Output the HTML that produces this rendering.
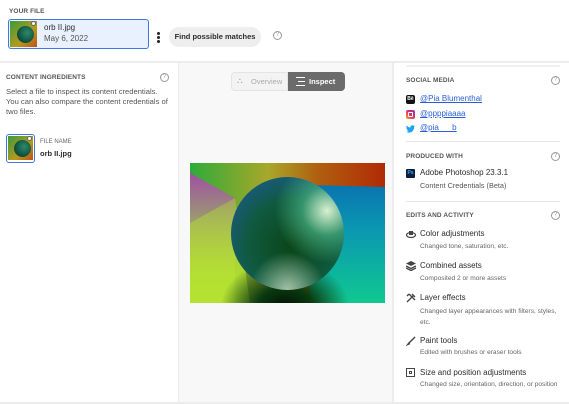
<!DOCTYPE html>
<html><head><meta charset="utf-8"><style>
*{box-sizing:border-box;margin:0;padding:0}
body{width:569px;height:404px;overflow:hidden;background:#fff;font-family:"Liberation Sans",sans-serif;color:#2c2c2c;position:relative}
.abs{position:absolute}
.lbl{font-size:6.5px;font-weight:bold;color:#555;letter-spacing:.1px}
.q{position:absolute;width:9px;height:9px;border:1px solid #999;border-radius:50%;font-size:6px;color:#999;text-align:center;line-height:7px}
.thumb{background:linear-gradient(135deg,#3a9b3a,#b59a1d 60%,#c0501a);overflow:hidden}
.orbt{position:absolute;border-radius:50%;background:radial-gradient(circle at 60% 40%,#2d8a6a,#0b4a3a 70%)}
a{color:#2b5fd9;text-decoration:underline}
.t{font-size:8px}
.s{font-size:6.6px;color:#666}
</style></head><body>
<div class="abs lbl" style="left:9px;top:8px">YOUR FILE</div>
<div class="abs" style="left:8px;top:19px;width:141px;height:30px;border:1.5px solid #3b7be0;border-radius:3px;background:#e8f1fd"></div>
<div class="abs thumb" style="left:10px;top:21px;width:27px;height:26px"><div class="orbt" style="left:7px;top:5px;width:17px;height:17px"></div></div>
<div class="abs" style="left:31px;top:21px;width:5px;height:5px;border-radius:50%;background:#fff;border:1px solid #666"></div>
<div class="abs" style="left:44px;top:23px;font-size:8px">orb II.jpg</div>
<div class="abs" style="left:44px;top:34px;font-size:8px;color:#555">May 6, 2022</div>
<div class="abs" style="left:157px;top:36px;width:3px;height:3px;background:#222;border-radius:50%;box-shadow:0 4px 0 #222,0 -4px 0 #222"></div>
<div class="abs" style="left:169px;top:27px;width:92px;height:20px;border-radius:10px;background:#eee;font-size:7.5px;font-weight:bold;text-align:center;line-height:20px">Find possible matches</div>
<div class="q" style="left:273px;top:31px">?</div>
<div class="abs" style="left:0;top:61px;width:569px;height:2px;background:#ececec"></div>
<div class="abs lbl" style="left:6px;top:74px">CONTENT INGREDIENTS</div>
<div class="q" style="left:160px;top:73px">?</div>
<div class="abs" style="left:6px;top:87px;width:166px;font-size:7.6px;line-height:10px;color:#555">Select a file to inspect its content credentials. You can also compare the content credentials of two files.</div>
<div class="abs" style="left:6px;top:134px;width:29px;height:29px;border:1.5px solid #3b7be0;border-radius:3px"></div>
<div class="abs thumb" style="left:8px;top:136px;width:25px;height:24px"><div class="orbt" style="left:6px;top:4px;width:17px;height:17px"></div></div>
<div class="abs" style="left:27px;top:136px;width:5px;height:5px;border-radius:50%;background:#fff;border:1px solid #666"></div>
<div class="abs" style="left:40px;top:139px;font-size:6px;color:#666">FILE NAME</div>
<div class="abs" style="left:40px;top:149px;font-size:7.5px;font-weight:bold">orb II.jpg</div>
<div class="abs" style="left:178px;top:63px;width:216px;height:339px;background:#f8f8f8;border-left:1px solid #ececec;border-right:2px solid #ececec"></div>
<div class="abs" style="left:231px;top:72px;width:57px;height:19px;border:1px solid #e4e4e4;border-radius:4px 0 0 4px;background:#f3f3f3;font-size:7.5px;color:#aaa;line-height:17px;padding-left:19px">Overview</div>
<div class="abs" style="left:237px;top:76px;font-size:8px;color:#aaa">⛬</div>
<div class="abs" style="left:288px;top:72px;width:57px;height:19px;border-radius:0 4px 4px 0;background:#6b6b6b;color:#fff;font-size:7.5px;font-weight:bold;line-height:19px;padding-left:21px">Inspect</div>
<div class="abs" style="left:296px;top:77px;width:9px;height:9px;border-top:1px solid #fff;border-bottom:1px solid #fff"><div style="margin-top:3px;border-top:1px solid #fff;margin-left:2px"></div></div>
<div class="abs" style="left:190px;top:163px;width:195px;height:140px;overflow:hidden;background:linear-gradient(90deg,#2eaa3a,#a8a82a 40%,#b06010 65%,#b02a05)">
<div class="abs" style="left:0;top:0;width:195px;height:140px;clip-path:polygon(0 10px,45px 35px,45px 140px,0 140px);background:linear-gradient(180deg,#a04aa8 5%,#9a9a70 40%,#b8e030 90%)"></div>
<div class="abs" style="left:0;top:0;width:195px;height:140px;clip-path:polygon(0 60px,45px 35px,60px 140px,0 140px);background:linear-gradient(180deg,rgba(160,150,110,.5),rgba(180,225,50,.9) 80%)"></div>
<div class="abs" style="left:0;top:0;width:195px;height:140px;clip-path:polygon(120px 22px,195px 24px,195px 140px,120px 140px);background:linear-gradient(180deg,#0a63b0,#0a9ab0 50%,#10c890)"></div>
<div class="abs" style="left:30px;top:95px;width:130px;height:50px;background:radial-gradient(ellipse at 50% 100%,#021004,#0a3a10 30%,rgba(20,80,20,0) 70%)"></div>
<div class="abs" style="left:41px;top:14px;width:113px;height:113px;border-radius:50%;background:radial-gradient(circle at 85% 30%,#d8f0d0,rgba(80,190,140,.6) 20%,rgba(0,0,0,0) 42%),radial-gradient(circle at 50% 100%,rgba(200,220,190,.8),rgba(0,0,0,0) 30%),radial-gradient(circle at 55% 60%,#0b4518,#0f5a40 50%,#1a5a80 80%,#8fa0b0)"></div>
</div>
<div class="abs" style="left:406px;top:65px;width:154px;height:2px;background:#f0f0f0"></div>
<div class="abs lbl" style="left:406px;top:77px">SOCIAL MEDIA</div>
<div class="q" style="left:551px;top:76px">?</div>
<div class="abs" style="left:406px;top:95px;width:9px;height:9px;background:#111;border-radius:2px;color:#fff;font-size:5px;font-weight:bold;text-align:center;line-height:9px">Bē</div>
<div class="abs t" style="left:420px;top:94px"><a>@Pia Blumenthal</a></div>
<div class="abs" style="left:406px;top:110px;width:9px;height:9px;border-radius:2px;background:linear-gradient(45deg,#f5a623,#e1306c,#833ab4)"><div style="margin:2px;width:5px;height:5px;border:1px solid #fff;border-radius:1px"></div></div>
<div class="abs t" style="left:420px;top:109px"><a>@ppppiaaaa</a></div>
<svg class="abs" style="left:406px;top:125px" width="9" height="8" viewBox="0 0 24 20"><path fill="#1da1f2" d="M24 2.4a10 10 0 0 1-2.8.8A5 5 0 0 0 23.3.5a10 10 0 0 1-3.1 1.2A4.9 4.9 0 0 0 11.8 6 14 14 0 0 1 1.7.9a4.9 4.9 0 0 0 1.5 6.6A4.9 4.9 0 0 1 1 6.9a4.9 4.9 0 0 0 3.9 4.9 5 5 0 0 1-2.2.1 4.9 4.9 0 0 0 4.6 3.4A9.9 9.9 0 0 1 0 17.3 14 14 0 0 0 7.5 19.5c9.1 0 14-7.5 14-14v-.6A10 10 0 0 0 24 2.4z"/></svg>
<div class="abs t" style="left:420px;top:123px"><a>@pia___b</a></div>
<div class="abs" style="left:406px;top:141px;width:154px;height:1px;background:#e6e6e6"></div>
<div class="abs lbl" style="left:406px;top:153px">PRODUCED WITH</div>
<div class="q" style="left:551px;top:152px">?</div>
<div class="abs" style="left:406px;top:169px;width:9px;height:9px;background:#0a1e3c;border-radius:1px;color:#31a8ff;font-size:5px;font-weight:bold;text-align:center;line-height:9px">Ps</div>
<div class="abs t" style="left:420px;top:168px">Adobe Photoshop 23.3.1</div>
<div class="abs" style="left:420px;top:181px;font-size:7.3px;color:#555">Content Credentials (Beta)</div>
<div class="abs" style="left:406px;top:201px;width:154px;height:1px;background:#e6e6e6"></div>
<div class="abs lbl" style="left:406px;top:212px">EDITS AND ACTIVITY</div>
<div class="q" style="left:551px;top:211px">?</div>
<svg class="abs" style="left:406px;top:230px" width="10" height="8" viewBox="0 0 10 8"><ellipse cx="5" cy="5" rx="4.5" ry="2.5" fill="none" stroke="#444" stroke-width="1.2"/><rect x="3" y="1" width="4" height="4" fill="#444"/></svg>
<div class="abs t" style="left:420px;top:229px">Color adjustments</div>
<div class="abs s" style="left:420px;top:243px">Changed tone, saturation, etc.</div>
<svg class="abs" style="left:406px;top:261px" width="10" height="10" viewBox="0 0 10 10"><path d="M5 0 10 2.5 5 5 0 2.5z" fill="#444"/><path d="M0 5 5 7.5 10 5M0 7 5 9.5 10 7" stroke="#444" fill="none" stroke-width="1.4"/></svg>
<div class="abs t" style="left:420px;top:261px">Combined assets</div>
<div class="abs s" style="left:420px;top:275px">Composited 2 or more assets</div>
<svg class="abs" style="left:406px;top:293px" width="10" height="10" viewBox="0 0 10 10"><path d="M1 9 7 3M3 1 9 7M6 1l3 3M1 3l2-2" stroke="#444" stroke-width="1.4" fill="none"/></svg>
<div class="abs t" style="left:420px;top:293px">Layer effects</div>
<div class="abs s" style="left:420px;top:306px;width:148px;line-height:11px">Changed layer appearances with filters, styles, etc.</div>
<svg class="abs" style="left:406px;top:336px" width="10" height="10" viewBox="0 0 10 10"><path d="M9 1 3 7" stroke="#444" stroke-width="1.4"/><path d="M3 6.5 1 9l2.5-1z" fill="#444" stroke="#444"/></svg>
<div class="abs t" style="left:420px;top:336px">Paint tools</div>
<div class="abs s" style="left:420px;top:349px">Edited with brushes or eraser tools</div>
<div class="abs" style="left:406px;top:368px;width:9px;height:9px;border:1px solid #444"><div style="margin:2px;width:3px;height:3px;border:1px solid #444"></div></div>
<div class="abs t" style="left:420px;top:368px">Size and position adjustments</div>
<div class="abs s" style="left:420px;top:381px">Changed size, orientation, direction, or position</div>
<div class="abs" style="left:0;top:402px;width:569px;height:2px;background:#ececec"></div>
</body></html>
